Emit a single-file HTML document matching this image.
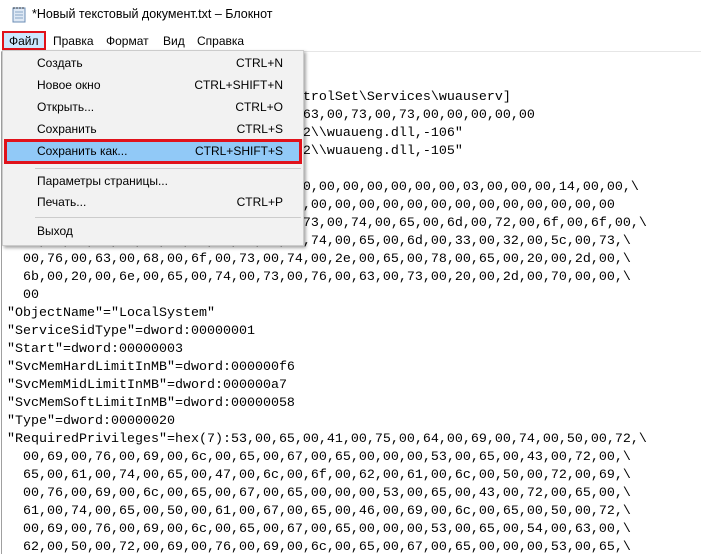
<!DOCTYPE html>
<html><head><meta charset="utf-8"><style>
*{margin:0;padding:0;box-sizing:border-box}
body{width:701px;height:554px;overflow:hidden;background:#fff;position:relative;font-family:"Liberation Sans",sans-serif;}
.title{position:absolute;left:32px;top:7px;font-size:12.5px;color:#000}
.menubar{position:absolute;top:31px;left:0;height:19px;font-size:12px}
.menubar span{position:absolute;top:3px;white-space:nowrap}
.file{position:absolute;left:2px;top:31px;width:44px;height:19px;background:#cce8ff;border:2px solid #e0121b}
.edit{position:absolute;left:1px;top:51px;right:0;bottom:0;border-left:1px solid #a0a0a0;border-top:1px solid #e6e6e6}
pre{position:absolute;left:7px;top:53px;font-family:"Liberation Mono",monospace;font-size:13.33px;line-height:18px;color:#000}
.menu{position:absolute;left:2px;top:50px;width:302px;height:196px;background:#f2f2f2;border:1px solid #ccc;box-shadow:2px 2px 3px rgba(0,0,0,.35);font-size:12px}
.it{position:absolute;left:34px;right:20px;height:20px;line-height:20px}
.it b{font-weight:normal;position:absolute;right:0;top:0}
.sep{position:absolute;left:32px;right:2px;height:1px;background:#ccc}
.hl{position:absolute;left:1px;top:88px;width:298px;height:25px;background:#91c9f7;border:3px solid #e0121b}
</style></head><body>
<svg style="position:absolute;left:11px;top:6px" width="16" height="17" viewBox="0 0 16 17"><rect x="2" y="2" width="12" height="14" fill="#dfe9f5" stroke="#6b8db5"/><path d="M4 6h8M4 9h8M4 12h8" stroke="#8aa6c8"/><path d="M3 1v2M6 1v2M9 1v2M12 1v2" stroke="#555"/></svg>
<div class="title">*Новый текстовый документ.txt – Блокнот</div>
<div class="file"></div>
<div class="menubar"><span style="left:9px">Файл</span><span style="left:53px">Правка</span><span style="left:106px">Формат</span><span style="left:163px">Вид</span><span style="left:197px">Справка</span></div>
<div class="edit"></div>
<pre>Windows Registry Editor Version 5.00

[HKEY_LOCAL_MACHINE\SYSTEM\CurrentControlSet\Services\wuauserv]
"DependOnService"=hex(7):72,00,70,00,63,00,73,00,73,00,00,00,00,00
"Description"="@%systemroot%\\system32\\wuaueng.dll,-106"
"DisplayName"="@%systemroot%\\system32\\wuaueng.dll,-105"
"ErrorControl"=dword:00000001
"FailureActions"=hex:80,51,01,00,00,00,00,00,00,00,00,00,03,00,00,00,14,00,00,\
  00,01,00,00,00,60,ea,00,00,00,00,00,00,00,00,00,00,00,00,00,00,00,00,00,00
"ImagePath"=hex(2):25,00,53,00,79,00,73,00,74,00,65,00,6d,00,72,00,6f,00,6f,00,\
  74,00,25,00,5c,00,73,00,79,00,73,00,74,00,65,00,6d,00,33,00,32,00,5c,00,73,\
  00,76,00,63,00,68,00,6f,00,73,00,74,00,2e,00,65,00,78,00,65,00,20,00,2d,00,\
  6b,00,20,00,6e,00,65,00,74,00,73,00,76,00,63,00,73,00,20,00,2d,00,70,00,00,\
  00
"ObjectName"="LocalSystem"
"ServiceSidType"=dword:00000001
"Start"=dword:00000003
"SvcMemHardLimitInMB"=dword:000000f6
"SvcMemMidLimitInMB"=dword:000000a7
"SvcMemSoftLimitInMB"=dword:00000058
"Type"=dword:00000020
"RequiredPrivileges"=hex(7):53,00,65,00,41,00,75,00,64,00,69,00,74,00,50,00,72,\
  00,69,00,76,00,69,00,6c,00,65,00,67,00,65,00,00,00,53,00,65,00,43,00,72,00,\
  65,00,61,00,74,00,65,00,47,00,6c,00,6f,00,62,00,61,00,6c,00,50,00,72,00,69,\
  00,76,00,69,00,6c,00,65,00,67,00,65,00,00,00,53,00,65,00,43,00,72,00,65,00,\
  61,00,74,00,65,00,50,00,61,00,67,00,65,00,46,00,69,00,6c,00,65,00,50,00,72,\
  00,69,00,76,00,69,00,6c,00,65,00,67,00,65,00,00,00,53,00,65,00,54,00,63,00,\
  62,00,50,00,72,00,69,00,76,00,69,00,6c,00,65,00,67,00,65,00,00,00,53,00,65,\</pre>
<div class="menu">
<div class="hl"></div>
<div class="it" style="top:2px">Создать<b>CTRL+N</b></div>
<div class="it" style="top:24px">Новое окно<b>CTRL+SHIFT+N</b></div>
<div class="it" style="top:46px">Открыть...<b>CTRL+O</b></div>
<div class="it" style="top:68px">Сохранить<b>CTRL+S</b></div>
<div class="it" style="top:90px">Сохранить как...<b>CTRL+SHIFT+S</b></div>
<div class="sep" style="top:117px"></div>
<div class="it" style="top:120px">Параметры страницы...</div>
<div class="it" style="top:141px">Печать...<b>CTRL+P</b></div>
<div class="sep" style="top:166px"></div>
<div class="it" style="top:170px">Выход</div>
</div>
</body></html>
